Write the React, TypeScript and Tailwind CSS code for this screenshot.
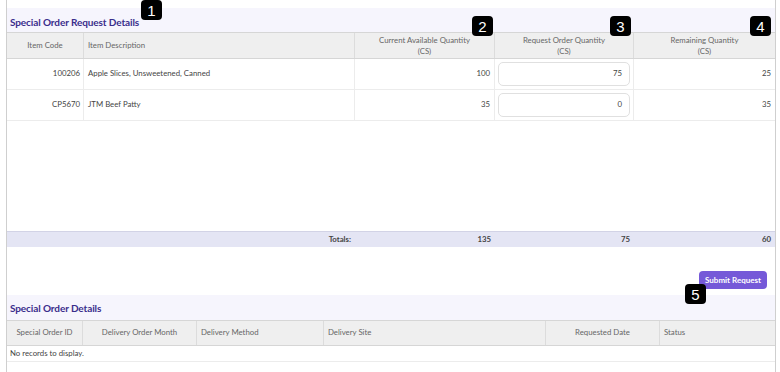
import React from 'react'

const font = { fontFamily: 'Lato, "Open Sans", sans-serif' }

function Badge({ n, className }: { n: number; className: string }) {
    return (
        <div className={`absolute z-10 flex items-center justify-center w-[21px] h-[20px] rounded-[4px] bg-black text-white text-[15px] leading-none ${className}`} style={{ fontFamily: '"Liberation Sans", Arial, sans-serif' }}>
            {n}
        </div>
    )
}

const items = [
    { code: '100206', desc: 'Apple Slices, Unsweetened, Canned', avail: 100, req: 75, rem: 25 },
    { code: 'CP5670', desc: 'JTM Beef Patty', avail: 35, req: 0, rem: 35 },
]

export default function App() {
    return (
        <div className="w-[780px] h-[372px] overflow-hidden bg-white" style={font}>
            <div className="relative ml-[6px] w-[770px] h-[372px] border-x border-[#cfcfcf] pt-[8px] text-[#555]">
                <Badge n={1} className="left-[134px] top-0" />
                <Badge n={2} className="left-[465px] top-[16px]" />
                <Badge n={3} className="left-[603px] top-[16px]" />
                <Badge n={4} className="left-[743px] top-[16px]" />
                <Badge n={5} className="left-[678px] top-[284px]" />

                {/* Special order request */}
                <div className="h-[24px] bg-[#f6f5fd] flex items-center pl-[3px] pt-[4px]">
                    <span className="text-[10px] tracking-[-0.1px] font-bold text-[#3a2d8c]">Special Order Request Details</span>
                </div>

                <div className="grid grid-cols-[77px_271px_140px_139px_141px] h-[27px] bg-[#efefef] border-y border-[#d6d6d6] text-[7.8px] text-[#666]">
                    <div className="flex items-center justify-center border-r border-[#dcdcdc]">Item Code</div>
                    <div className="flex items-center pl-[4px] border-r border-[#dcdcdc]">Item Description</div>
                    <div className="flex flex-col items-center justify-center leading-[11px] border-r border-[#dcdcdc]">
                        <span>Current Available Quantity</span><span>(CS)</span>
                    </div>
                    <div className="flex flex-col items-center justify-center leading-[11px] border-r border-[#dcdcdc]">
                        <span>Request Order Quantity</span><span>(CS)</span>
                    </div>
                    <div className="flex flex-col items-center justify-center leading-[11px]">
                        <span>Remaining Quantity</span><span>(CS)</span>
                    </div>
                </div>

                {items.map((it) => (
                    <div key={it.code} className="grid grid-cols-[77px_271px_140px_139px_141px] h-[31px] border-b border-[#ececec] text-[7.8px] text-[#444]">
                        <div className="flex items-center justify-end pr-[3px] border-r border-[#ececec]">{it.code}</div>
                        <div className="flex items-center pl-[4px] border-r border-[#ececec]">{it.desc}</div>
                        <div className="flex items-center justify-end pr-[4px] border-r border-[#ececec]">{it.avail}</div>
                        <div className="flex items-center px-[3px] border-r border-[#ececec]">
                            <div className="w-full h-[24px] rounded-[5px] border border-[#e0e0e0] flex items-center justify-end pr-[7px]">{it.req}</div>
                        </div>
                        <div className="flex items-center justify-end pr-[4px]">{it.rem}</div>
                    </div>
                ))}

                <div className="h-[110px]" />

                <div className="grid grid-cols-[77px_271px_140px_139px_141px] h-[16px] bg-[#e4e5f4] border-t border-[#d2d3e6] text-[7.8px] font-bold text-[#444]">
                    <div />
                    <div className="flex items-center justify-end pr-[4px]">Totals:</div>
                    <div className="flex items-center justify-end pr-[4px]">135</div>
                    <div className="flex items-center justify-end pr-[4px]">75</div>
                    <div className="flex items-center justify-end pr-[4px]">60</div>
                </div>

                <div className="flex justify-end pr-[8px] pt-[24px] h-[48px]">
                    <button className="h-[18px] px-[6px] rounded-[4px] bg-[#7559d8] text-white text-[8px] font-bold">Submit Request</button>
                </div>

                {/* Special order details */}
                <div className="h-[25px] bg-[#f6f5fd] flex items-center pl-[3px] pt-[1px]">
                    <span className="text-[10px] tracking-[-0.1px] font-bold text-[#3a2d8c]">Special Order Details</span>
                </div>

                <div className="grid grid-cols-[76px_114px_127px_222px_114px_115px] h-[26px] bg-[#efefef] border-y border-[#d6d6d6] text-[7.8px] text-[#666]">
                    <div className="flex items-center justify-center border-r border-[#dcdcdc]">Special Order ID</div>
                    <div className="flex items-center justify-center border-r border-[#dcdcdc]">Delivery Order Month</div>
                    <div className="flex items-center pl-[4px] border-r border-[#dcdcdc]">Delivery Method</div>
                    <div className="flex items-center pl-[4px] border-r border-[#dcdcdc]">Delivery Site</div>
                    <div className="flex items-center justify-center border-r border-[#dcdcdc]">Requested Date</div>
                    <div className="flex items-center pl-[4px]">Status</div>
                </div>
                <div className="h-[16px] flex items-center pl-[3px] border-b border-[#ececec] text-[7.8px] text-[#444]">
                    No records to display.
                </div>
            </div>
        </div>
    )
}
